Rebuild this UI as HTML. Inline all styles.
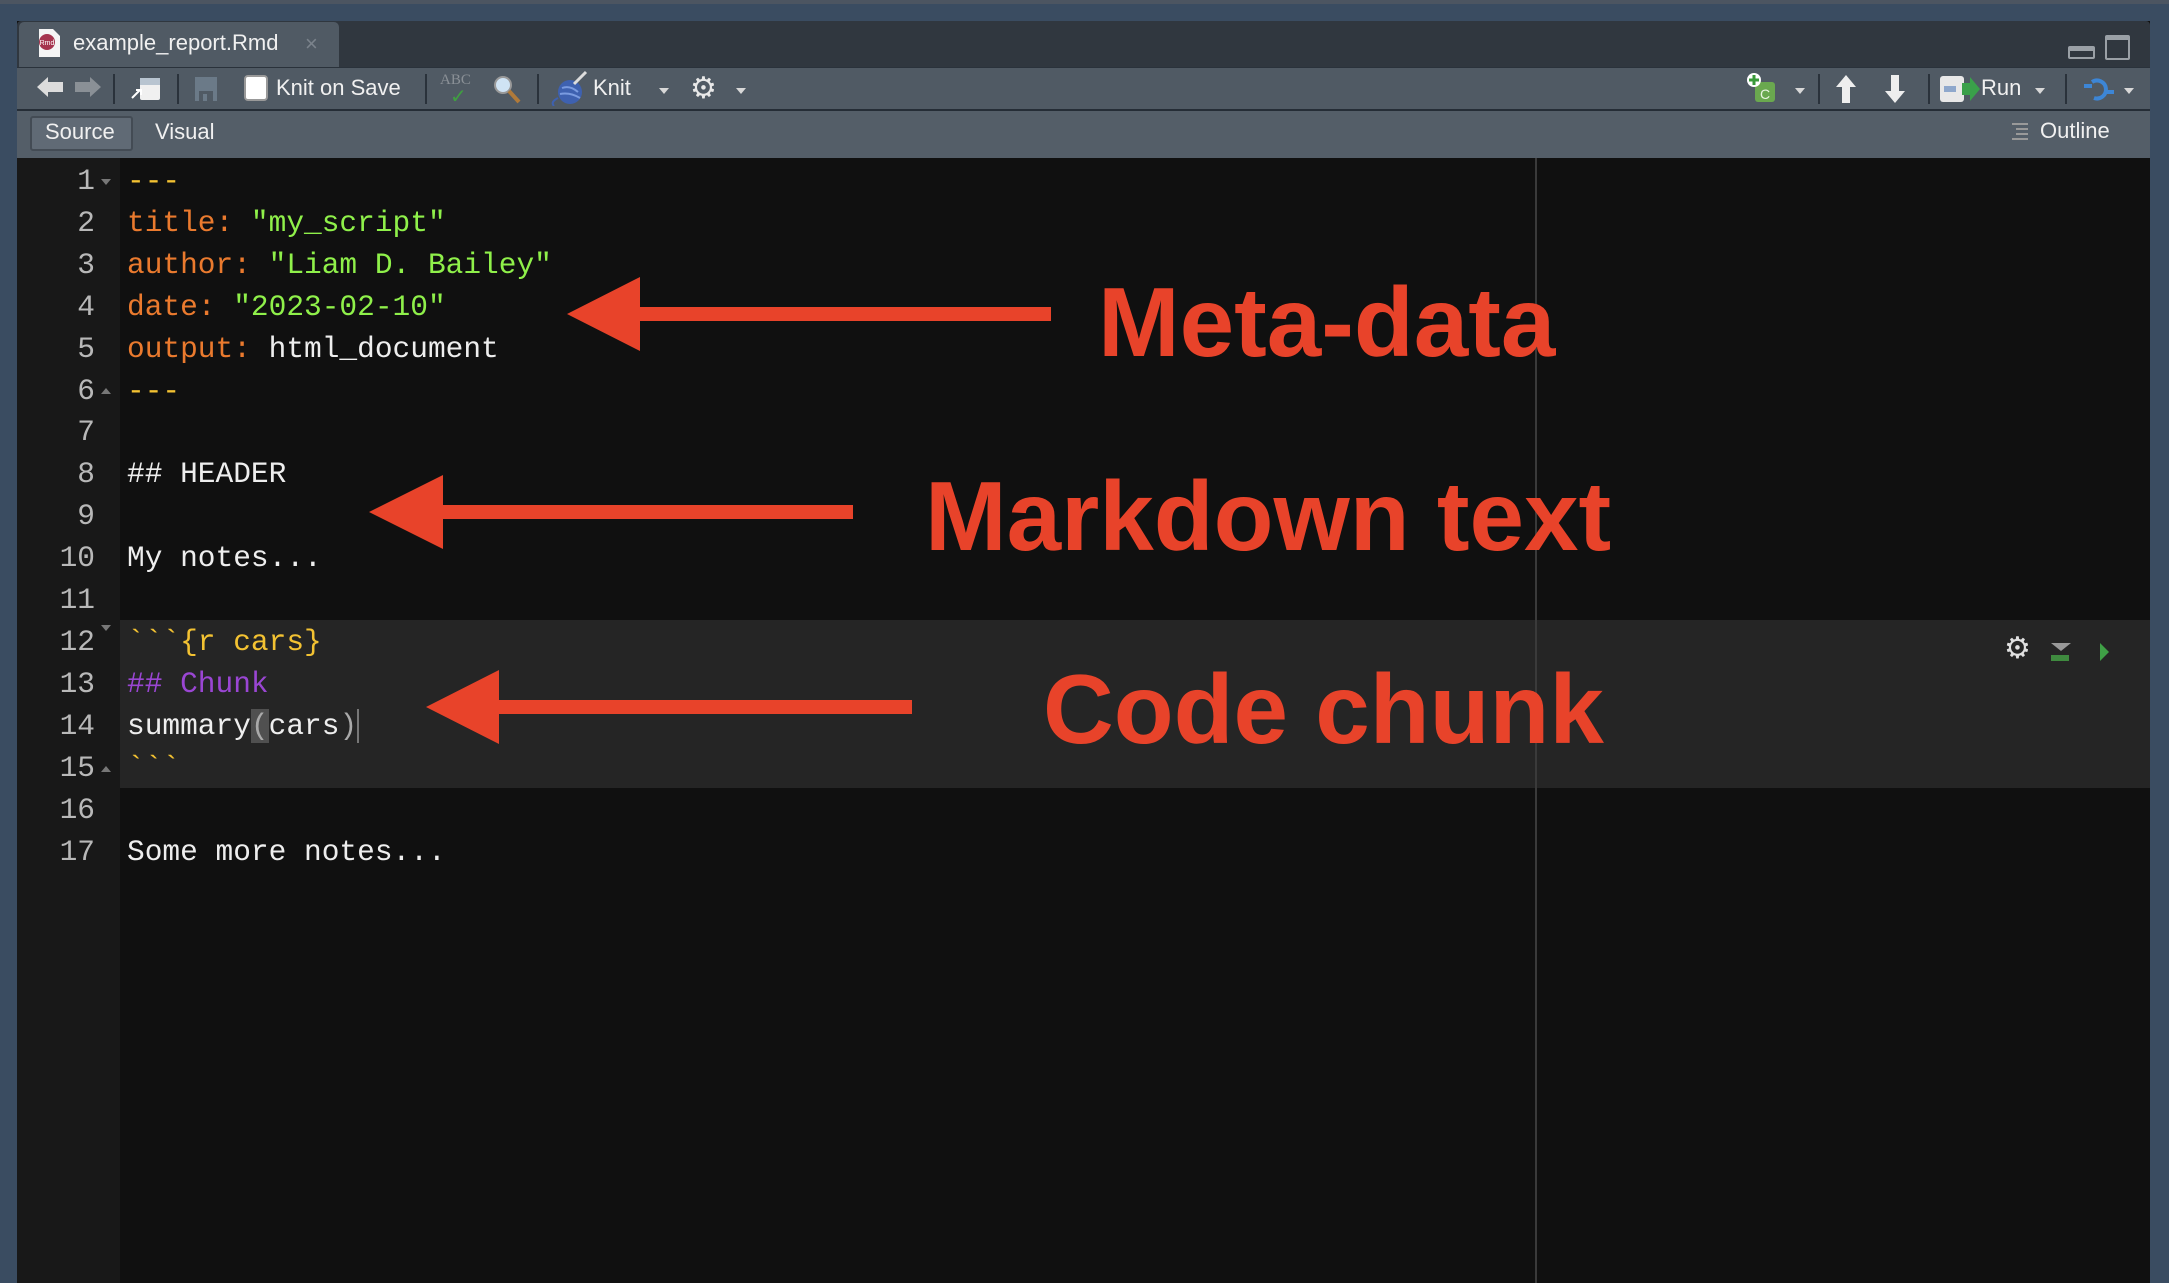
<!DOCTYPE html>
<html><head><meta charset="utf-8"><style>
*{margin:0;padding:0;box-sizing:border-box}
body{width:2169px;height:1283px;background:#3a4c61;position:relative;overflow:hidden;font-family:"Liberation Sans",sans-serif}
.abs{position:absolute}
.ui{color:#f0f0f0;font-size:22px;line-height:1}
.sep{position:absolute;top:74px;width:2px;height:30px;background:#2a323b}
.car{position:absolute;width:0;height:0;border-left:5px solid transparent;border-right:5px solid transparent;border-top:6px solid #d8d8d8}
.code{position:absolute;left:127px;top:161px;font-family:"Liberation Mono",monospace;font-size:29.5px;line-height:41.9px;color:#eeeeee;white-space:pre}
.nums{position:absolute;left:17px;width:78px;top:161px;font-family:"Liberation Mono",monospace;font-size:29.5px;line-height:41.9px;color:#b8b8b8;text-align:right;white-space:pre}
.o{color:#ea7a2e}.g{color:#8ff04a}.y{color:#f3c232}.p{color:#9a46d3}
</style></head><body>
<div class="abs" style="left:0;top:0;width:2169px;height:4px;background:#4c5561"></div>
<div class="abs" style="left:17px;top:21px;width:2133px;height:1262px;background:#101010"></div>
<div class="abs" style="left:17px;top:21px;width:2133px;height:46px;background:#30373f;border-radius:4px 4px 0 0"></div>
<div class="abs" style="left:19px;top:22px;width:320px;height:46px;background:#505a64;border-radius:5px 5px 0 0"></div>
<svg class="abs" style="left:36px;top:28px" width="26" height="30" viewBox="0 0 26 30"><path d="M3 1h14l7 7v21H3z" fill="#f4f4f4"/><circle cx="11" cy="14" r="8" fill="#a5344e"/><text x="11" y="17" font-size="7" fill="#fff" text-anchor="middle" font-family="Liberation Sans">Rmd</text></svg>
<div class="abs ui" style="left:73px;top:32px;font-size:22px">example_report.Rmd</div>
<div class="abs" style="left:305px;top:31px;color:#7b838c;font-size:22px">×</div>
<div class="abs" style="left:2068px;top:46px;width:27px;height:13px;border:2px solid #9aa0a6;border-top-width:5px;border-radius:2px"></div>
<div class="abs" style="left:2105px;top:35px;width:25px;height:25px;border:2px solid #9aa0a6;border-top-width:5px;border-radius:2px"></div>
<div class="abs" style="left:17px;top:67px;width:2133px;height:42px;background:#505a64;border-top:1px solid #2a323b"></div>
<div class="abs" style="left:17px;top:109px;width:2133px;height:2px;background:#252d36"></div>
<svg class="abs" style="left:35px;top:76px" width="68" height="22"><path d="M2 11 L13 1 V6 H28 V16 H13 V21Z" fill="#dcdcdc"/><path d="M66 11 L55 1 V6 H40 V16 H55 V21Z" fill="#8a9096"/></svg>
<div class="sep" style="left:113px"></div>
<svg class="abs" style="left:130px;top:76px" width="32" height="26"><rect x="10" y="2" width="20" height="22" rx="2" fill="#f0f0f0"/><rect x="10" y="2" width="20" height="7" fill="#b8c4d0"/><path d="M2 22 L10 14 M6 14 H11 V19" stroke="#fff" stroke-width="2" fill="none"/></svg>
<div class="sep" style="left:177px"></div>
<svg class="abs" style="left:195px;top:77px" width="22" height="24"><rect width="22" height="24" fill="#6b7a88"/><rect x="4" y="14" width="14" height="10" fill="#505a64"/><rect x="8" y="17" width="4" height="7" fill="#6b7a88"/></svg>
<div class="abs" style="left:244px;top:75px;width:24px;height:26px;background:#fff;border:2px solid #999;border-radius:4px"></div>
<div class="abs ui" style="left:276px;top:77px">Knit on Save</div>
<div class="sep" style="left:425px"></div>
<div class="abs" style="left:440px;top:72px;font-family:'Liberation Serif',serif;font-size:15px;color:#8a9096">ABC</div>
<div class="abs" style="left:450px;top:84px;color:#3fa040;font-size:20px">✓</div>
<svg class="abs" style="left:492px;top:74px" width="30" height="30"><circle cx="11" cy="11" r="8" fill="#cfe3f4" stroke="#999" stroke-width="2"/><path d="M17 17 L27 28" stroke="#b07a3a" stroke-width="4"/></svg>
<div class="sep" style="left:537px"></div>
<svg class="abs" style="left:548px;top:70px" width="40" height="36"><circle cx="22" cy="22" r="12" fill="#3e61b0"/><path d="M14 18 q8 -3 16 4 M12 24 q10 -2 20 4" stroke="#7a9be0" stroke-width="2" fill="none"/><path d="M26 14 L38 2" stroke="#ddd" stroke-width="3"/><path d="M10 28 q-8 4 -4 8" stroke="#3e61b0" stroke-width="2" fill="none"/></svg>
<div class="abs ui" style="left:593px;top:77px">Knit</div>
<div class="car" style="left:659px;top:88px"></div>
<div class="abs" style="left:690px;top:71px;color:#e8e8e8;font-size:30px">⚙</div>
<div class="car" style="left:736px;top:88px"></div>
<svg class="abs" style="left:1745px;top:72px" width="34" height="34"><rect x="10" y="10" width="20" height="20" rx="3" fill="#6aa84f"/><text x="20" y="27" font-size="14" fill="#e8f4e0" text-anchor="middle" font-family="Liberation Sans">C</text><circle cx="9" cy="8" r="7" fill="#fff"/><path d="M9 3v10M4 8h10" stroke="#3a9a3a" stroke-width="3"/></svg>
<div class="car" style="left:1795px;top:88px"></div>
<div class="sep" style="left:1818px"></div>
<svg class="abs" style="left:1835px;top:74px" width="22" height="30"><path d="M11 1 L21 13 H15 V29 H7 V13 H1Z" fill="#eee"/></svg>
<svg class="abs" style="left:1884px;top:74px" width="22" height="30"><path d="M11 29 L21 17 H15 V1 H7 V17 H1Z" fill="#eee"/></svg>
<div class="sep" style="left:1928px"></div>
<svg class="abs" style="left:1940px;top:76px" width="40" height="26"><rect x="0" y="0" width="24" height="26" rx="3" fill="#e8e8e8"/><rect x="4" y="10" width="12" height="6" fill="#8fa8cc"/><path d="M22 7 H30 V1 L40 13 L30 25 V19 H22Z" fill="#3aa04a"/></svg>
<div class="abs ui" style="left:1981px;top:77px">Run</div>
<div class="car" style="left:2035px;top:88px"></div>
<div class="sep" style="left:2065px"></div>
<svg class="abs" style="left:2082px;top:74px" width="34" height="30"><path d="M2 12 H10 M24 18 H32" stroke="#3d86d6" stroke-width="4"/><path d="M10 8 A9 9 0 1 1 12 24" stroke="#3d86d6" stroke-width="4" fill="none"/></svg>
<div class="car" style="left:2124px;top:88px"></div>
<div class="abs" style="left:17px;top:111px;width:2133px;height:47px;background:#545e68"></div>
<div class="abs" style="left:30px;top:116px;width:103px;height:35px;background:#606a75;border:2px solid #434b54;border-radius:3px"></div>
<div class="abs ui" style="left:45px;top:121px">Source</div>
<div class="abs ui" style="left:155px;top:121px">Visual</div>
<svg class="abs" style="left:2010px;top:121px" width="22" height="22"><path d="M2 3h16M6 8h12M6 13h12M2 18h16" stroke="#999" stroke-width="2"/></svg>
<div class="abs ui" style="left:2040px;top:120px">Outline</div>
<div class="abs" style="left:17px;top:158px;width:103px;height:1125px;background:#181818"></div>
<div class="abs" style="left:120px;top:620px;width:2030px;height:168px;background:#252525"></div>
<div class="abs" style="left:1535px;top:158px;width:2px;height:1125px;background:#3a3a3a"></div>
<div class="nums">1
2
3
4
5
6
7
8
9
10
11
12
13
14
15
16
17</div>
<svg class="abs" style="left:100px;top:160px" width="14" height="640"><path d="M1 19h10l-5 6z M1 465h10l-5 6z M1 648h10l-5 6z" fill="#777"/><path d="M1 234h10l-5-6z M1 612h10l-5-6z" fill="#777"/></svg>
<div class="code"><span class="y">---</span>
<span class="o">title:</span> <span class="g">"my_script"</span>
<span class="o">author:</span> <span class="g">"Liam D. Bailey"</span>
<span class="o">date:</span> <span class="g">"2023-02-10"</span>
<span class="o">output:</span> html_document
<span class="y">---</span>

## HEADER

My notes...

<span class="y">&#96;&#96;&#96;{r cars}</span>
<span class="p">## Chunk</span>
summary<span style="background:#505050;color:#aaa">(</span>cars<span style="color:#aaa">)</span><span style="border-left:2px solid #777"></span>
<span class="y">&#96;&#96;&#96;</span>

Some more notes...</div>
<div class="abs" style="left:2004px;top:634px;color:#e0e0e0;font-size:30px;line-height:1">⚙</div>
<svg class="abs" style="left:2050px;top:642px" width="22" height="20"><path d="M1 1h20l-10 8z" fill="#999"/><rect x="1" y="13" width="18" height="6" fill="#3f8a3f"/></svg>
<svg class="abs" style="left:2099px;top:642px" width="12" height="20"><path d="M1 1 L10 10 L1 19Z" fill="#3fa046"/></svg>
<svg class="abs" style="left:0;top:0" width="2169" height="1283">
<g fill="#e8432a">
<path d="M567 314 L640 277 L640 307 L1051 307 L1051 321 L640 321 L640 351Z"/>
<path d="M369 512 L443 475 L443 505 L853 505 L853 519 L443 519 L443 549Z"/>
<path d="M426 707 L499 670 L499 700 L912 700 L912 714 L499 714 L499 744Z"/>
</g>
<g fill="#e8432a" font-family="Liberation Sans, sans-serif" font-weight="bold" font-size="98">
<text x="1098" y="356">Meta-data</text>
<text x="925" y="550">Markdown text</text>
<text x="1043" y="743">Code chunk</text>
</g>
</svg>
</body></html>
